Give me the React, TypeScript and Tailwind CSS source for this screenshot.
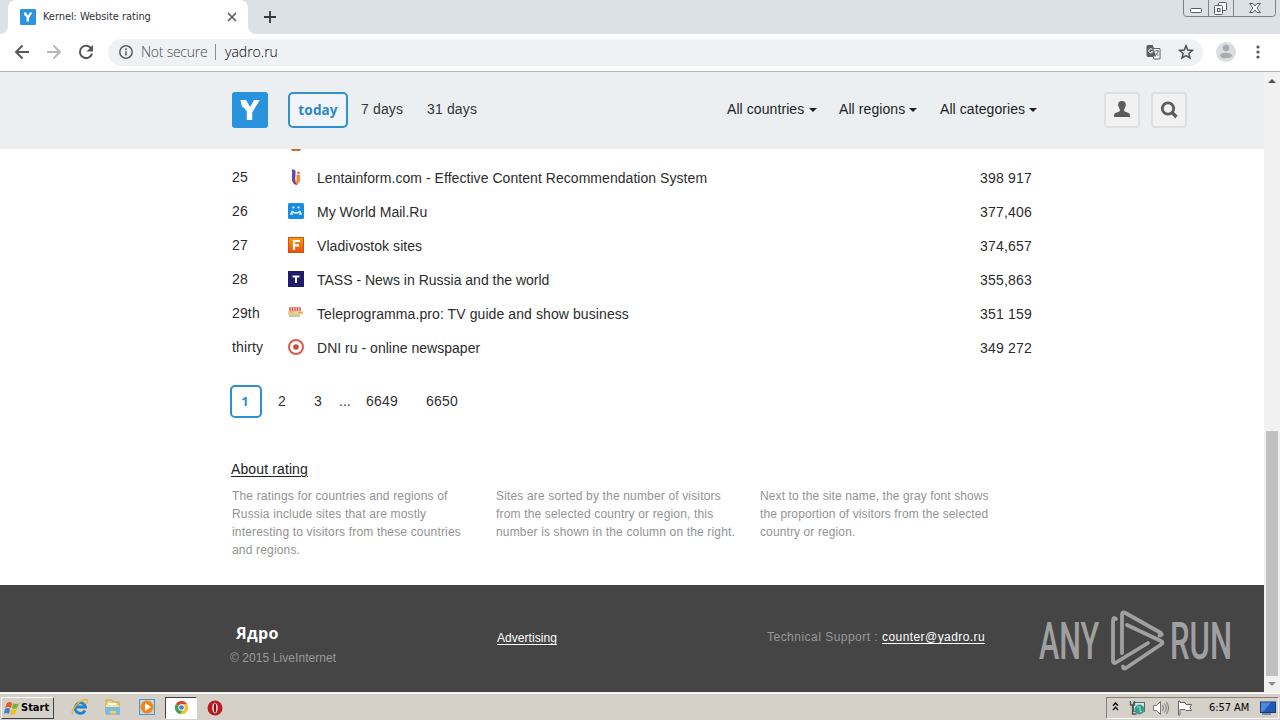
import React from "react";

const ARIAL = "font-['Liberation_Sans',sans-serif]";

function YLogo({ size }: { size: number }) {
  return (
    <svg width={size} height={size} viewBox="0 0 36 36" className="block shrink-0">
      <rect width="36" height="36" rx="3" fill="#2a93de" />
      <path d="M8.500 8H14l4 7L22 8h5.800L20.200 20.500V28h-5.400v-8.500L12 15.500l-1.800-.3z" fill="#fff" />
    </svg>
  );
}

function Tabs() {
  return (
    <div className="flex h-[34px] bg-[#dce0e7]">
      <div className="flex w-[8px] items-end bg-white">
        <div className="h-full w-full rounded-br-[8px] bg-[#dce0e7]" />
      </div>
      <div className="flex h-[34px] w-[240px] items-center rounded-t-[8px] bg-white pl-3">
        <YLogo size={16} />
        <span className="ml-[7px] w-[150px] whitespace-nowrap font-['DejaVu_Sans_Condensed','DejaVu_Sans',sans-serif] text-[11px] leading-4 tracking-[-0.070px] text-[#303236]">Kernel: Website rating</span>
        <svg width="10" height="10" viewBox="0 0 10 10" className="ml-[34px]"><path d="M1 1l8 8M9 1l-8 8" stroke="#53565b" strokeWidth="1.600" /></svg>
      </div>
      <div className="w-[8px] bg-white"><div className="h-full w-full rounded-bl-[8px] bg-[#dce0e7]" /></div>
      <svg width="12" height="12" viewBox="0 0 12 12" className="ml-[8px] mt-[11px]"><path d="M6 0v12M0 6h12" stroke="#34373b" strokeWidth="1.800" /></svg>
      <svg width="94" height="17" viewBox="0 0 94 17" className="ml-auto mr-[3px]" fill="none">
        <path d="M.5 0v13.500q0 3 3 3h86q3 0 3-3V0M25.500 0v16M50.500 0v16" stroke="#7d828c" />
        <rect x="7.500" y="8.500" width="11" height="4" rx="1" fill="#fff" stroke="#575b66" />
        <rect x="35.500" y="2.500" width="8" height="8" rx="1" fill="#fff" stroke="#575b66" />
        <rect x="31.500" y="5.500" width="8" height="9" rx="1" fill="#fff" stroke="#575b66" />
        <rect x="34.500" y="8.500" width="2.500" height="3" stroke="#575b66" />
        <path d="M66.500 3.500h3.500l2 2.500 2-2.500h3.500L74 8l3.500 4.500H74L72 10l-2 2.500h-3.500L70 8z" fill="#fff" stroke="#575b66" />
      </svg>
    </div>
  );
}

function Toolbar() {
  return (
    <div className="flex h-[38px] items-center border-b border-[#b2b4b5] bg-white pb-[1px]">
      <svg width="16" height="16" viewBox="0 0 16 16" className="ml-[14px]" fill="none" stroke="#53565b" strokeWidth="1.900"><path d="M15 8H2M8.500 1.500L2 8l6.500 6.500" /></svg>
      <svg width="16" height="16" viewBox="0 0 16 16" className="ml-[16px]" fill="none" stroke="#b5b7ba" strokeWidth="1.900"><path d="M1 8h13M7.500 1.500L14 8l-6.500 6.500" /></svg>
      <svg width="16" height="16" viewBox="0 0 16 16" className="ml-[16px]" fill="none"><path d="M13.600 5A6.200 6.200 0 1 0 14.100 9.500" stroke="#53565b" strokeWidth="2" /><path d="M15 1v6.500H8.500z" fill="#53565b" /></svg>
      <div className="ml-[14px] flex h-[27px] w-[1095px] items-center rounded-full bg-[#eff2f5] pl-[11px]">
        <svg width="14" height="14" viewBox="0 0 14 14" fill="none" stroke="#5b5f64" strokeWidth="1.500"><circle cx="7" cy="7" r="6.200" /><path d="M7 6.200v4.300M7 3.300v1.600" /></svg>
        <span className="ml-2 w-[68px] whitespace-nowrap font-['Open_Sans',sans-serif] text-[14px] font-light leading-5 tracking-[-0.250px] text-[#484b50]">Not secure</span>
        <span className="ml-[6px] h-4 w-px bg-[#8b8e92]" />
        <span className="ml-[9px] whitespace-nowrap font-['Open_Sans',sans-serif] text-[14px] font-light leading-5 text-black">yadro.ru</span>
        <svg width="15" height="15" viewBox="0 0 15 15" className="ml-auto mr-[17px]" fill="none">
          <path d="M1.500.5h5l1 3h6.500v10.500H8l-.8-2.500H1.500z" fill="#fff" stroke="#5b5f64" />
          <path d="M1.500.5h5L10 11.500H1.500a1 1 0 0 1-1-1v-9a1 1 0 0 1 1-1z" fill="#5b5f64" />
          <path d="M6.500 4.800a2 2 0 1 0 .2 1.700H5" stroke="#fff" />
          <path d="M8.500 6h4.500M10.800 5v1M12.300 6q-.5 3-3 4.200M9.500 8l3 3" stroke="#5b5f64" strokeWidth=".9" />
        </svg>
        <svg width="16" height="16" viewBox="0 0 24 24" className="mr-[9px]" fill="none" stroke="#4d5055" strokeWidth="2.300"><path d="M12 2.800l2.700 6.300 6.800.6-5.200 4.500 1.600 6.700-5.900-3.600-5.900 3.600 1.600-6.700-5.200-4.500 6.800-.6z" /></svg>
      </div>
      <svg width="20" height="20" viewBox="0 0 20 20" className="ml-[13px]"><circle cx="10" cy="10" r="10" fill="#dadcde" /><circle cx="10" cy="6" r="3.200" fill="#a9abae" /><ellipse cx="10" cy="13.500" rx="6" ry="2.800" fill="#a9abae" /></svg>
      <svg width="4" height="14" viewBox="0 0 4 14" className="ml-[20px]" fill="#53565b"><circle cx="2" cy="2" r="1.600" /><circle cx="2" cy="7" r="1.600" /><circle cx="2" cy="12" r="1.600" /></svg>
    </div>
  );
}

function Menu({ children, cls }: { children: React.ReactNode; cls: string }) {
  return (
    <div className={"flex shrink-0 items-center justify-between whitespace-nowrap text-[14px] tracking-[0.080px] text-[#1c1f22] " + cls}>
      <span>{children}</span>
      <svg width="8" height="4" viewBox="0 0 8 4" className="mt-[2px]"><path d="M0 0h8L4 4z" fill="#1c1f22" /></svg>
    </div>
  );
}

function Header() {
  return (
    <header className="flex h-[77px] border-b-2 border-[#eeeeee] bg-[#ebeff2] pl-[232px] pt-5">
      <YLogo size={36} />
      <div className="ml-5 flex h-9 w-[60px] items-center justify-center rounded-[5px] border-2 border-[#2f8fd2] bg-[#f1f5f9] pb-px font-['Noto_Sans','Open_Sans',sans-serif] text-[13.500px] font-bold leading-5 tracking-[0.150px] text-[#2b87c8]">today</div>
      <span className="ml-[13px] flex h-[34px] w-[66px] items-center whitespace-nowrap text-[14px] tracking-[0.150px] text-[#333]">7 days</span>
      <span className="flex h-[34px] w-[300px] items-center whitespace-nowrap text-[14px] tracking-[0.150px] text-[#333]">31 days</span>
      <div className="flex h-[34px]">
        <Menu cls="w-[90px]">All countries</Menu>
        <Menu cls="ml-[22px] w-[78px]">All regions</Menu>
        <Menu cls="ml-[23px] w-[97px]">All categories</Menu>
      </div>
      <div className="ml-[67px] flex h-9 w-9 items-center justify-center rounded-[4px] border-2 border-[#dde0e2] bg-[#f1f1f1]">
        <svg width="16" height="17" viewBox="0 0 16 17" fill="#5b5b5b" className="mb-[2px]"><path d="M8 0c2.700 0 4 1.500 3.800 4-.1 1.700-.8 3-1.600 4v2.300l5 2q.8.500.8 3.700H0q0-3.200.8-3.700l5-2V8C5 7 4.300 5.700 4.200 4 4 1.500 5.300 0 8 0z" /></svg>
      </div>
      <div className="ml-[11px] flex h-9 w-9 items-center justify-center rounded-[4px] border-2 border-[#dde0e2] bg-[#f1f1f1]">
        <svg width="18" height="18" viewBox="0 0 18 18" fill="none" stroke="#5b5b5b"><circle cx="8" cy="7.500" r="5.700" strokeWidth="2.800" /><path d="M12 11.500l4.500 4.500" strokeWidth="3.300" /></svg>
      </div>
    </header>
  );
}

const icons = [
  <svg key="l" width="16" height="16" viewBox="0 0 16 16"><path d="M4 0l3.500 1.500V10l1.500 6-3-1-2-3z" fill="#6b4a9b" /><path d="M8.500 6H12v6l-3 4-2-1z" fill="#f08a2c" /><path d="M6 11l3 5-3-1.200z" fill="#a0305a" /><circle cx="10.500" cy="4" r="1.400" fill="#ef6b50" /><path d="M8 7.500v5" stroke="#fff" /></svg>,
  <svg key="m" width="16" height="16" viewBox="0 0 16 16"><rect width="16" height="16" rx="1.500" fill="#168de2" /><circle cx="5.500" cy="4.500" r="1.100" fill="#fff" /><circle cx="10.500" cy="4.500" r="1.100" fill="#fff" /><path d="M3.500 8q4.500 4 9 0" fill="none" stroke="#fff" strokeWidth="1.500" /><path d="M1.500 11.500l2.500-3.500 1 4zM14.500 11.500L12 8l-1 4z" fill="#d9effc" /></svg>,
  <svg key="f" width="16" height="16" viewBox="0 0 16 16"><defs><linearGradient id="fg" x2="0" y2="1"><stop stopColor="#fb9a10" /><stop offset="1" stopColor="#e94f10" /></linearGradient></defs><rect x=".5" y=".5" width="15" height="15" fill="url(#fg)" stroke="#c9520f" /><path d="M6 13V4h6M6 8.300h5" fill="none" stroke="#fff" strokeWidth="2.200" /></svg>,
  <svg key="t" width="16" height="16" viewBox="0 0 16 16"><rect width="16" height="16" fill="#1f1d6b" /><path d="M4.500 5.500h7M8 5.500V12" stroke="#fff" strokeWidth="2" /></svg>,
  <svg key="p" width="16" height="16" viewBox="0 0 16 16"><path d="M1 2h12v5H1z" fill="#f3c3b8" /><path d="M2 2v4M4.500 2v4M7 2v4M9.500 2v4M12 2v4" stroke="#d8635a" strokeWidth="1.300" /><path d="M0 6h15v3.500H0z" fill="#f4cf8c" /><path d="M1 9h11v3H1z" fill="#c2d09a" /><path d="M2 7h3M10 7.500h4" stroke="#e79b52" /></svg>,
  <svg key="d" width="16" height="16" viewBox="0 0 16 16"><circle cx="8" cy="8" r="7" fill="#fff" stroke="#dc5a4e" strokeWidth="2" /><circle cx="8" cy="8" r="2.800" fill="#d4463c" /></svg>,
];

const rows = [
  ["25", "Lentainform.com - Effective Content Recommendation System", "398 917", "tracking-[0.050px]"],
  ["26", "My World Mail.Ru", "377,406", "tracking-normal"],
  ["27", "Vladivostok sites", "374,657", "tracking-[0.050px]"],
  ["28", "TASS - News in Russia and the world", "355,863", "tracking-normal"],
  ["29th", "Teleprogramma.pro: TV guide and show business", "351 159", "tracking-[0.090px]"],
  ["thirty", "DNI ru - online newspaper", "349 272", "tracking-[0.020px]"],
];

function Rating() {
  return (
    <div className="pl-[232px] text-[14px] text-[#2c2c2c]">
      <div className="flex h-3 pl-[59px]"><div className="h-[2px] w-[10px] rounded-b-full bg-[#c9702e]" /></div>
      {rows.map((r, i) => (
        <div key={r[0]} className="flex h-[34px] w-[800px] items-center whitespace-nowrap">
          <span className="w-[56px] shrink-0 pb-[2px] tracking-[0.150px]">{r[0]}</span>
          <span className="mr-[13px] block shrink-0 pb-[2px]">{icons[i]}</span>
          <span className={r[3]}>{r[1]}</span>
          <span className="ml-auto tracking-[0.200px]">{r[2]}</span>
        </div>
      ))}
    </div>
  );
}

function Pager() {
  return (
    <div className="mt-5 flex h-[33px] items-center pl-[230px] text-[14px] tracking-[0.200px] text-[#333]">
      <span className="mr-4 flex h-[33px] w-8 items-center justify-center rounded-[5px] border-2 border-[#2f8fd2] pr-[2px] font-['Noto_Sans','Open_Sans',sans-serif] text-[13px] font-bold text-[#2b8fd4]">1</span>
      <span className="w-9">2</span>
      <span className="w-[25px]">3</span>
      <span className="w-[27px] tracking-normal">...</span>
      <span className="w-[60px]">6649</span>
      <span>6650</span>
    </div>
  );
}

function About() {
  return (
    <section className="mt-[41px] h-[126px]">
      <h2 className="ml-[231px] h-5 text-[14px] leading-5 tracking-[0.120px] text-[#222] underline underline-offset-2">About rating</h2>
      <div className="ml-[232px] mt-[8px] flex whitespace-nowrap text-[12px] leading-[18px] text-[#939393]">
        <p className="w-[264px] tracking-[0.170px]">The ratings for countries and regions of<br />Russia include sites that are mostly<br />interesting to visitors from these countries<br />and regions.</p>
        <p className="w-[264px] tracking-[0.160px]">Sites are sorted by the number of visitors<br />from the selected country or region, this<br />number is shown in the column on the right.</p>
        <p className="tracking-[0.110px]">Next to the site name, the gray font shows<br />the proportion of visitors from the selected<br />country or region.</p>
      </div>
    </section>
  );
}

function Footer() {
  return (
    <footer className="relative flex h-[107px] whitespace-nowrap bg-[#454545] text-[12px] text-[#999]">
      <div className="w-[497px] pl-[230px] pt-[37px]">
        <div className="h-[24px] pl-[6px] font-['Open_Sans',sans-serif] text-[16px] font-bold leading-[22px] tracking-[0.400px] text-white">Ядро</div>
        <div className="h-6 leading-6 tracking-[0.070px]">© 2015 LiveInternet</div>
      </div>
      <a className="h-fit w-[270px] pt-[44px] leading-[18px] tracking-[0.050px] text-white underline underline-offset-2">Advertising</a>
      <div className="pt-[43px] leading-[18px] tracking-[0.480px]">Technical Support : <a className="tracking-[0.430px] text-white underline underline-offset-2">counter@yadro.ru</a></div>
      <div className="absolute left-[1039px] top-[24px] flex h-[64px] w-[194px] font-['Roboto',sans-serif] text-[51px] leading-[66px] text-[#a0a0a0]">
        <div className="w-[71px]"><div className="w-fit origin-left scale-x-[0.6] font-medium">ANY</div></div>
        <svg width="56" height="64" viewBox="0 0 56 64" fill="none" stroke="#a0a0a0" strokeWidth="3.800" strokeLinecap="round" strokeLinejoin="round" className="shrink-0">
          <path d="M6 10Q3 7 3 12v40q0 3 3 1.500L38 34" />
          <path d="M12 44V6q0-4 3.500-2L51 24q2 2-1.500 2.500" />
          <path d="M17 16l34 16q3 1.500 0 3.500L16 59q-3 1.500-3-1.500" />
        </svg>
        <div className="ml-[4px] w-[63px]"><div className="w-fit origin-left scale-x-[0.61] font-medium">RUN</div></div>
      </div>
    </footer>
  );
}

function Taskbar() {
  return (
    <div className="flex h-7 items-center border-t border-[#efeeea] bg-[#d5d0c8] font-['DejaVu_Sans_Condensed','DejaVu_Sans',sans-serif] text-[11px] text-black shadow-[inset_0_1px_0_#ffffff]">
      <div className="ml-px mt-[2px] flex h-[22px] w-[53px] items-center border border-t-white border-l-white border-r-[#404040] border-b-[#404040] pl-[2px] pt-px font-bold">
        <svg width="16" height="15" viewBox="0 0 16 15" className="mr-px shrink-0"><path d="M3 2q3-2 5 0L7 7Q4 5 1 7z" fill="#e65a27" /><path d="M9 2q3 2 6 0l-2 5q-3 2-5 0z" fill="#74b72b" /><path d="M1 8q3-2 5 0l-1 5q-3-2-5 0z" fill="#3b7fd9" /><path d="M7 8q3 2 6 0l-2 5q-3 2-5 0z" fill="#f6bd22" /></svg>
        Start
      </div>
      <svg width="18" height="18" viewBox="0 0 18 18" className="ml-[17px] mt-[1px]" fill="none"><path d="M14 12.500A5.300 5.300 0 1 1 14.500 9H5" stroke="#2381cf" strokeWidth="2.800" /><path d="M2 16C-1 13 7 3 14 1.500c4-.5 2 3.500 1 4.500" stroke="#e9b62e" strokeWidth="1.400" /></svg>
      <svg width="18" height="18" viewBox="0 0 18 18" className="ml-[15px] mt-[1px]"><path d="M2 2h6l1 2h6v12H2z" fill="#efd275" stroke="#c8a53f" /><path d="M4 5h8v4H4z" fill="#fff" /><path d="M1 9h15v8h-4v-4H6v4H2z" fill="#79bbdf" /><path d="M2 7h13v2H2z" fill="#f5e39a" /></svg>
      <svg width="18" height="18" viewBox="0 0 18 18" className="ml-[16px] mt-[1px]"><rect x="1.500" y="1.500" width="15" height="15" fill="#b9d7ee" stroke="#5b91c2" /><circle cx="9" cy="9" r="6.500" fill="#f28719" /><path d="M7 5l6 4-6 4z" fill="#fff" /></svg>
      <div className="ml-[9px] mt-[2px] flex h-[22px] w-[32px] items-center justify-center border border-t-[#404040] border-l-[#404040] border-r-white border-b-white bg-white">
        <svg width="15" height="15" viewBox="0 0 16 16"><circle cx="8" cy="8" r="7" fill="#e5d9a0" /><path d="M8 8L1.900 4.500A7 7 0 0 1 14.100 4.500H8z" fill="#d94436" /><path d="M8 8L1.900 4.500A7 7 0 0 0 7 15l3-5z" fill="#43a352" /><path d="M8 5h6.400A7 7 0 0 1 7 15l4-6z" fill="#f5c42d" /><circle cx="8" cy="8" r="3.400" fill="#fff" /><circle cx="8" cy="8" r="2.500" fill="#3f7fd8" /></svg>
      </div>
      <svg width="16" height="16" viewBox="0 0 16 16" className="ml-[10px] mt-[2px]"><circle cx="8" cy="8" r="7.500" fill="#bb1b20" /><ellipse cx="8" cy="8" rx="2.700" ry="5.300" fill="#f5e8e6" /><ellipse cx="8" cy="8" rx="1.200" ry="4.700" fill="#851014" /></svg>
      <div className="ml-auto mr-[1px] mt-[2px] flex h-[22px] w-[173px] items-center border border-t-[#858078] border-l-[#858078] border-r-white border-b-white">
        <svg width="7" height="9" viewBox="0 0 7 9" className="ml-[5px] mb-[2px]" fill="none" stroke="#000" strokeWidth="1.300"><path d="M1 3.800L3.500 1 6 3.800M1 8l2.500-2.800L6 8" /></svg>
        <svg width="17" height="16" viewBox="0 0 17 16" className="ml-[10px]"><rect x="4.500" y="2.500" width="11" height="9" fill="#d8e8e7" stroke="#4b6d6c" /><path d="M1.500 1v4h4V1M3.500 5v9h4" fill="none" stroke="#4d5652" strokeWidth="1.300" /><circle cx="10.500" cy="9.500" r="5" fill="#3a9c8b" /><path d="M8 7q4-1 3 2t2 3" stroke="#a9ded0" fill="none" /></svg>
        <svg width="16" height="16" viewBox="0 0 16 16" className="ml-[7px]" fill="none" stroke="#777"><path d="M.5 5.500h3L7.500 1.500v13L3.500 10.500h-3z" fill="#fff" /><path d="M9.500 5q2 3 0 6M11.500 3.500q3.500 4.500 0 9M13.500 2q4 6 0 12" /></svg>
        <svg width="16" height="16" viewBox="0 0 16 16" className="ml-[8px]" fill="#fff" stroke="#666"><path d="M1.500 1v14h1.500V9.500h5L9 10.500h5.500L13 7.500l1.500-3H9L8 2.500H3V1z" /></svg>
        <span className="ml-[16px] w-[42px] whitespace-nowrap pt-px tracking-[-0.070px]">6:57 AM</span>
        <svg width="16" height="14" viewBox="0 0 16 14" className="ml-[9px]"><rect x=".5" y="1" width="15" height="10.500" fill="#2058b5" stroke="#173a7b" /><path d="M1 1.500h10L3 11H1z" fill="#4d88d8" /><path d="M2 13h9" stroke="#27487c" /></svg>
      </div>
    </div>
  );
}

export default function App() {
  return (
    <div className={"h-[720px] w-[1280px] overflow-hidden bg-white " + ARIAL}>
      <Tabs />
      <Toolbar />
      <div className="flex h-[620px]">
        <main className="w-[1264px]">
          <Header />
          <Rating />
          <Pager />
          <About />
          <Footer />
        </main>
        <aside className="flex w-4 flex-col items-center bg-[#f1f1f1]">
          <svg width="8" height="4" viewBox="0 0 8 4" className="mt-[7px]"><path d="M0 4h8L4 0z" fill="#505050" /></svg>
          <div className="mt-auto h-[245px] w-3 bg-[#c1c1c1]" />
          <svg width="8" height="4" viewBox="0 0 8 4" className="mb-[6px] mt-[6px]"><path d="M0 0h8L4 4z" fill="#8d8d8d" /></svg>
        </aside>
      </div>
      <Taskbar />
    </div>
  );
}
